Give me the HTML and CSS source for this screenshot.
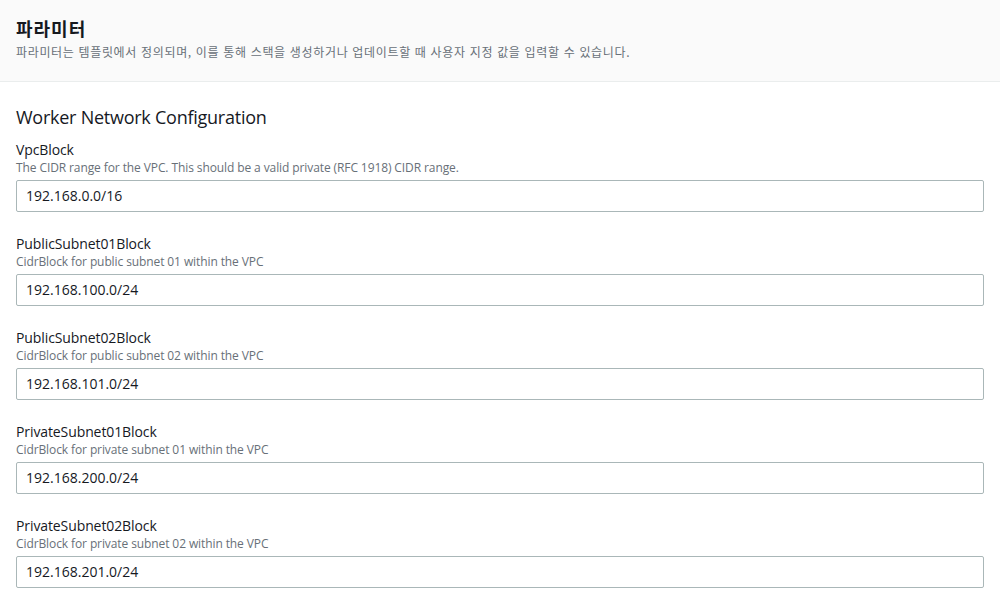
FILE: index.html
```html
<!DOCTYPE html>
<html lang="ko">
<head>
<meta charset="utf-8">
<link rel="stylesheet" href="styles.css">
</head>
<body>
<div class="header">
  <h1 class="title">파라미터</h1>
  <p class="subtitle">파라미터는 템플릿에서 정의되며, 이를 통해 스택을 생성하거나 업데이트할 때 사용자 지정 값을 입력할 수 있습니다.</p>
</div>
<div class="content">
  <h2 class="section-title">Worker Network Configuration</h2>
  <div class="field">
    <div class="label">VpcBlock</div>
    <div class="desc">The CIDR range for the VPC. This should be a valid private (RFC 1918) CIDR range.</div>
    <div class="input">192.168.0.0/16</div>
  </div>
  <div class="field">
    <div class="label">PublicSubnet01Block</div>
    <div class="desc">CidrBlock for public subnet 01 within the VPC</div>
    <div class="input">192.168.100.0/24</div>
  </div>
  <div class="field">
    <div class="label">PublicSubnet02Block</div>
    <div class="desc">CidrBlock for public subnet 02 within the VPC</div>
    <div class="input">192.168.101.0/24</div>
  </div>
  <div class="field">
    <div class="label">PrivateSubnet01Block</div>
    <div class="desc">CidrBlock for private subnet 01 within the VPC</div>
    <div class="input">192.168.200.0/24</div>
  </div>
  <div class="field">
    <div class="label">PrivateSubnet02Block</div>
    <div class="desc">CidrBlock for private subnet 02 within the VPC</div>
    <div class="input">192.168.201.0/24</div>
  </div>
</div>
</body>
</html>
```
FILE: styles.css
```css
* { box-sizing: border-box; }
html, body {
  margin: 0;
  padding: 0;
  background: #ffffff;
  font-family: "Open Sans", "Noto Sans CJK KR", sans-serif;
  color: #16191f;
  overflow: hidden;
}
.header {
  height: 82px;
  background: #fafafa;
  border-bottom: 1px solid #eaeded;
  padding: 16px 16px 0 16px;
}
.title {
  margin: 0;
  font-size: 18px;
  line-height: 24px;
  font-weight: 700;
  letter-spacing: 1px;
  font-family: "Noto Sans CJK KR", sans-serif;
  color: #16191f;
}
.subtitle {
  margin: 4px 0 0 0;
  font-size: 12px;
  line-height: 16px;
  letter-spacing: 0.66px;
  color: #687078;
  font-family: "Noto Sans CJK KR", sans-serif;
}
.content {
  padding: 23px 16px 0 16px;
}
.section-title {
  margin: 0 0 11px 0;
  font-size: 18px;
  line-height: 24px;
  font-weight: 400;
  letter-spacing: -0.25px;
}
.field {
  display: flex;
  flex-direction: column;
  margin-bottom: 22px;
}
.label {
  font-size: 14px;
  line-height: 20px;
  letter-spacing: -0.1px;
}
.desc {
  font-size: 12px;
  line-height: 16px;
  letter-spacing: -0.1px;
  color: #687078;
  margin-bottom: 4px;
}
.input {
  height: 32px;
  border: 1px solid #aab7b8;
  border-radius: 2px;
  padding: 0 9px;
  font-size: 14px;
  line-height: 30px;
  color: #16191f;
}
```
